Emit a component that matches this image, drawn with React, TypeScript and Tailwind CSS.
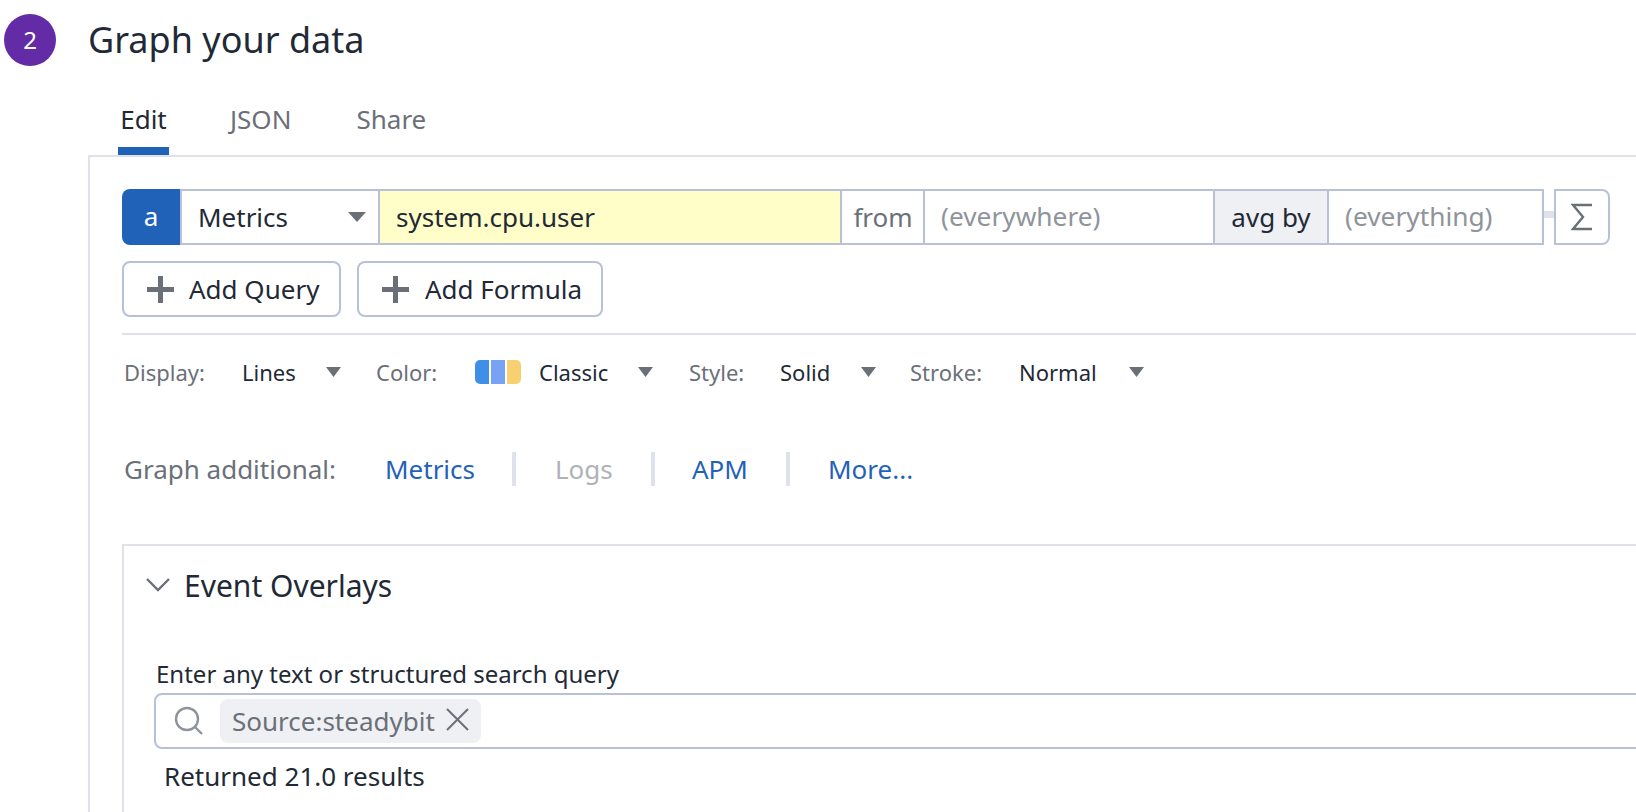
import React from "react";

function Caret({ w = 18, h = 10 }: { w?: number; h?: number }) {
  return (
    <svg width={w} height={h} viewBox="0 0 18 10" className="shrink-0" preserveAspectRatio="none">
      <polygon points="0,0 18,0 9,10" fill="#6b7078" />
    </svg>
  );
}

function Plus() {
  return (
    <svg width="27" height="27" viewBox="0 0 27 27" className="shrink-0">
      <rect x="0" y="11" width="27" height="5" fill="#6b7078" />
      <rect x="11" y="0" width="5" height="27" fill="#6b7078" />
    </svg>
  );
}

function Option({ label, value, labelW, valueW, caretW }: { label: string; value: string; labelW: string; valueW: string; caretW: string }) {
  return (
    <>
      <span className={`${labelW} text-[#6b7078]`}>{label}</span>
      <span className={`${valueW} text-[#1f2a36]`}>{value}</span>
      <span className={`${caretW} flex`}>
        <Caret w={15} h={10} />
      </span>
    </>
  );
}

export default function App() {
  return (
    <div
      className="h-[812px] w-[1636px] overflow-hidden bg-white text-[#1f2a36]"
      style={{ fontFamily: '"Noto Sans", sans-serif' }}
    >
      <header className="flex h-[66px] items-end pl-1">
        <div className="flex h-[52px] w-[52px] items-center justify-center rounded-full bg-[#632ca6] text-[24px] text-white">2</div>
        <h1 className="ml-[32px] pb-[4px] text-[36px] leading-[44px] font-normal">Graph your data</h1>
      </header>

      <nav className="ml-[118px] flex h-[89px] items-end text-[26px] text-[#6b7078]">
        <div className="flex h-[53px] w-[51px] flex-col items-center border-b-[8px] border-[#1f62b8] text-[#1f2a36]">
          <span className="leading-[34px]">Edit</span>
        </div>
        <span className="mb-[19px] ml-[61px] leading-[34px]">JSON</span>
        <span className="mb-[19px] ml-[65px] leading-[34px]">Share</span>
      </nav>

      <main className="ml-[88px] h-[700px] w-[1600px] border-t-2 border-l-2 border-[#dfe2ed] pt-[32px] pl-[32px]">
        <div className="flex h-[56px] items-stretch text-[26px]">
          <div className="flex w-[58px] items-center justify-center rounded-l-lg bg-[#1f62b8] pb-[2px] text-white">a</div>
          <div className="flex w-[200px] items-center justify-between border-y-2 border-r-2 border-l-2 border-[#b9c1da] pr-[12px] pl-[16px]">
            <span>Metrics</span>
            <Caret />
          </div>
          <div className="flex w-[462px] items-center border-y-2 border-r-2 border-[#b9c1da] bg-[#fffdc8] pl-[16px]">system.cpu.user</div>
          <div className="flex w-[83px] items-center justify-center border-y-2 border-r-2 border-[#b9c1da] pl-[1px] text-[#6b7078]">from</div>
          <div className="flex w-[290px] items-center border-y-2 border-r-2 border-[#b9c1da] pl-[16px] text-[26.3px] text-[#8f949b]">(everywhere)</div>
          <div className="flex w-[114px] items-center justify-center border-y-2 border-r-2 border-[#b9c1da] bg-[#eef0f4]">avg by</div>
          <div className="flex w-[215px] items-center border-y-2 border-r-2 border-[#b9c1da] pl-[16px] text-[26.3px] text-[#8f949b]">(everything)</div>
          <div className="mt-[22px] h-[7px] w-[10px] bg-[#dfe2ed]" />
          <div className="flex w-[56px] items-center justify-center rounded-r-lg border-2 border-[#b9c1da]">
            <svg width="22" height="28" viewBox="0 0 22 28" fill="none" stroke="#6b7078" strokeWidth="2.4">
              <path d="M21 2 H2 L12 14 L2 26 H21" />
            </svg>
          </div>
        </div>

        <div className="mt-[16px] flex gap-[16px] text-[26px]">
          <button className="flex h-[56px] w-[219px] items-center rounded-lg border-2 border-[#b9c1da] pl-[23px]">
            <Plus />
            <span className="ml-[15px]">Add Query</span>
          </button>
          <button className="flex h-[56px] w-[246px] items-center rounded-lg border-2 border-[#b9c1da] pl-[23px]">
            <Plus />
            <span className="ml-[16px]">Add Formula</span>
          </button>
        </div>

        <div className="mt-[16px] h-[2px] bg-[#dfe2ed]" />

        <div className="mt-[20px] flex h-[34px] items-center pl-[2px] text-[22px]">
          <Option label="Display:" value="Lines" labelW="w-[118px]" valueW="w-[84px]" caretW="w-[50px]" />
          <span className="w-[99px] text-[#6b7078]">Color:</span>
          <span className="flex h-[24px] w-[64px] shrink-0">
            <span className="flex h-[24px] w-[46px] gap-[1.5px] overflow-hidden rounded-[5px]">
              <span className="flex-1 bg-[#3f8fe8]" />
              <span className="flex-1 bg-[#78a3f5]" />
              <span className="flex-1 bg-[#f7d070]" />
            </span>
          </span>
          <span className="w-[99px]">Classic</span>
          <span className="flex w-[51px]">
            <Caret w={15} h={10} />
          </span>
          <Option label="Style:" value="Solid" labelW="w-[91px]" valueW="w-[81px]" caretW="w-[49px]" />
          <Option label="Stroke:" value="Normal" labelW="w-[109px]" valueW="w-[110px]" caretW="w-[16px]" />
        </div>

        <div className="mt-[63px] flex h-[34px] items-center pl-[2px] text-[26px]">
          <span className="w-[261px] text-[#6b7078]">Graph additional:</span>
          <span className="w-[127px] text-[#1f62b8]">Metrics</span>
          <span className="h-[34px] w-[4px] bg-[#dfe2ed]" />
          <span className="ml-[39px] w-[96px] text-[#b0b2b6]">Logs</span>
          <span className="h-[34px] w-[4px] bg-[#dfe2ed]" />
          <span className="ml-[37px] w-[94px] text-[#1f62b8]">APM</span>
          <span className="h-[34px] w-[4px] bg-[#dfe2ed]" />
          <span className="ml-[38px] text-[#1f62b8]">More...</span>
        </div>

        <section className="mt-[58px] h-[300px] w-[1600px] border-t-2 border-l-2 border-[#dfe2ed]">
          <div className="flex h-[78px] items-center pl-[22px]">
            <svg width="24" height="14" viewBox="0 0 24 14" fill="none" stroke="#6b7078" strokeWidth="2.4" className="shrink-0">
              <path d="M1 1 L12 12 L23 1" />
            </svg>
            <span className="ml-[14px] text-[30px]">Event Overlays</span>
          </div>
          <div className="mt-[34px] pl-[32px] text-[24px] leading-[32px]">Enter any text or structured search query</div>
          <div className="mt-[3px] ml-[30px] flex h-[56px] w-[1500px] items-center rounded-lg border-2 border-[#b9c1da] pl-[18px]">
            <svg width="30" height="30" viewBox="0 0 30 30" fill="none" stroke="#8f949b" strokeWidth="2.4" className="shrink-0">
              <circle cx="13" cy="13" r="11" />
              <path d="M21 21 L28 28" />
            </svg>
            <div className="ml-[16px] flex h-[44px] w-[261px] items-center rounded-lg bg-[#eef0f4] pl-[12px] text-[26px] text-[#6b7078]">
              <span>Source:steadybit</span>
              <svg width="23" height="23" viewBox="0 0 23 23" fill="none" stroke="#6b7078" strokeWidth="2" className="mb-[4px] ml-[11px] shrink-0">
                <path d="M1 1 L22 22 M22 1 L1 22" />
              </svg>
            </div>
          </div>
          <div className="mt-[10px] pl-[40px] text-[26px] leading-[34px]">Returned 21.0 results</div>
        </section>
      </main>
    </div>
  );
}
